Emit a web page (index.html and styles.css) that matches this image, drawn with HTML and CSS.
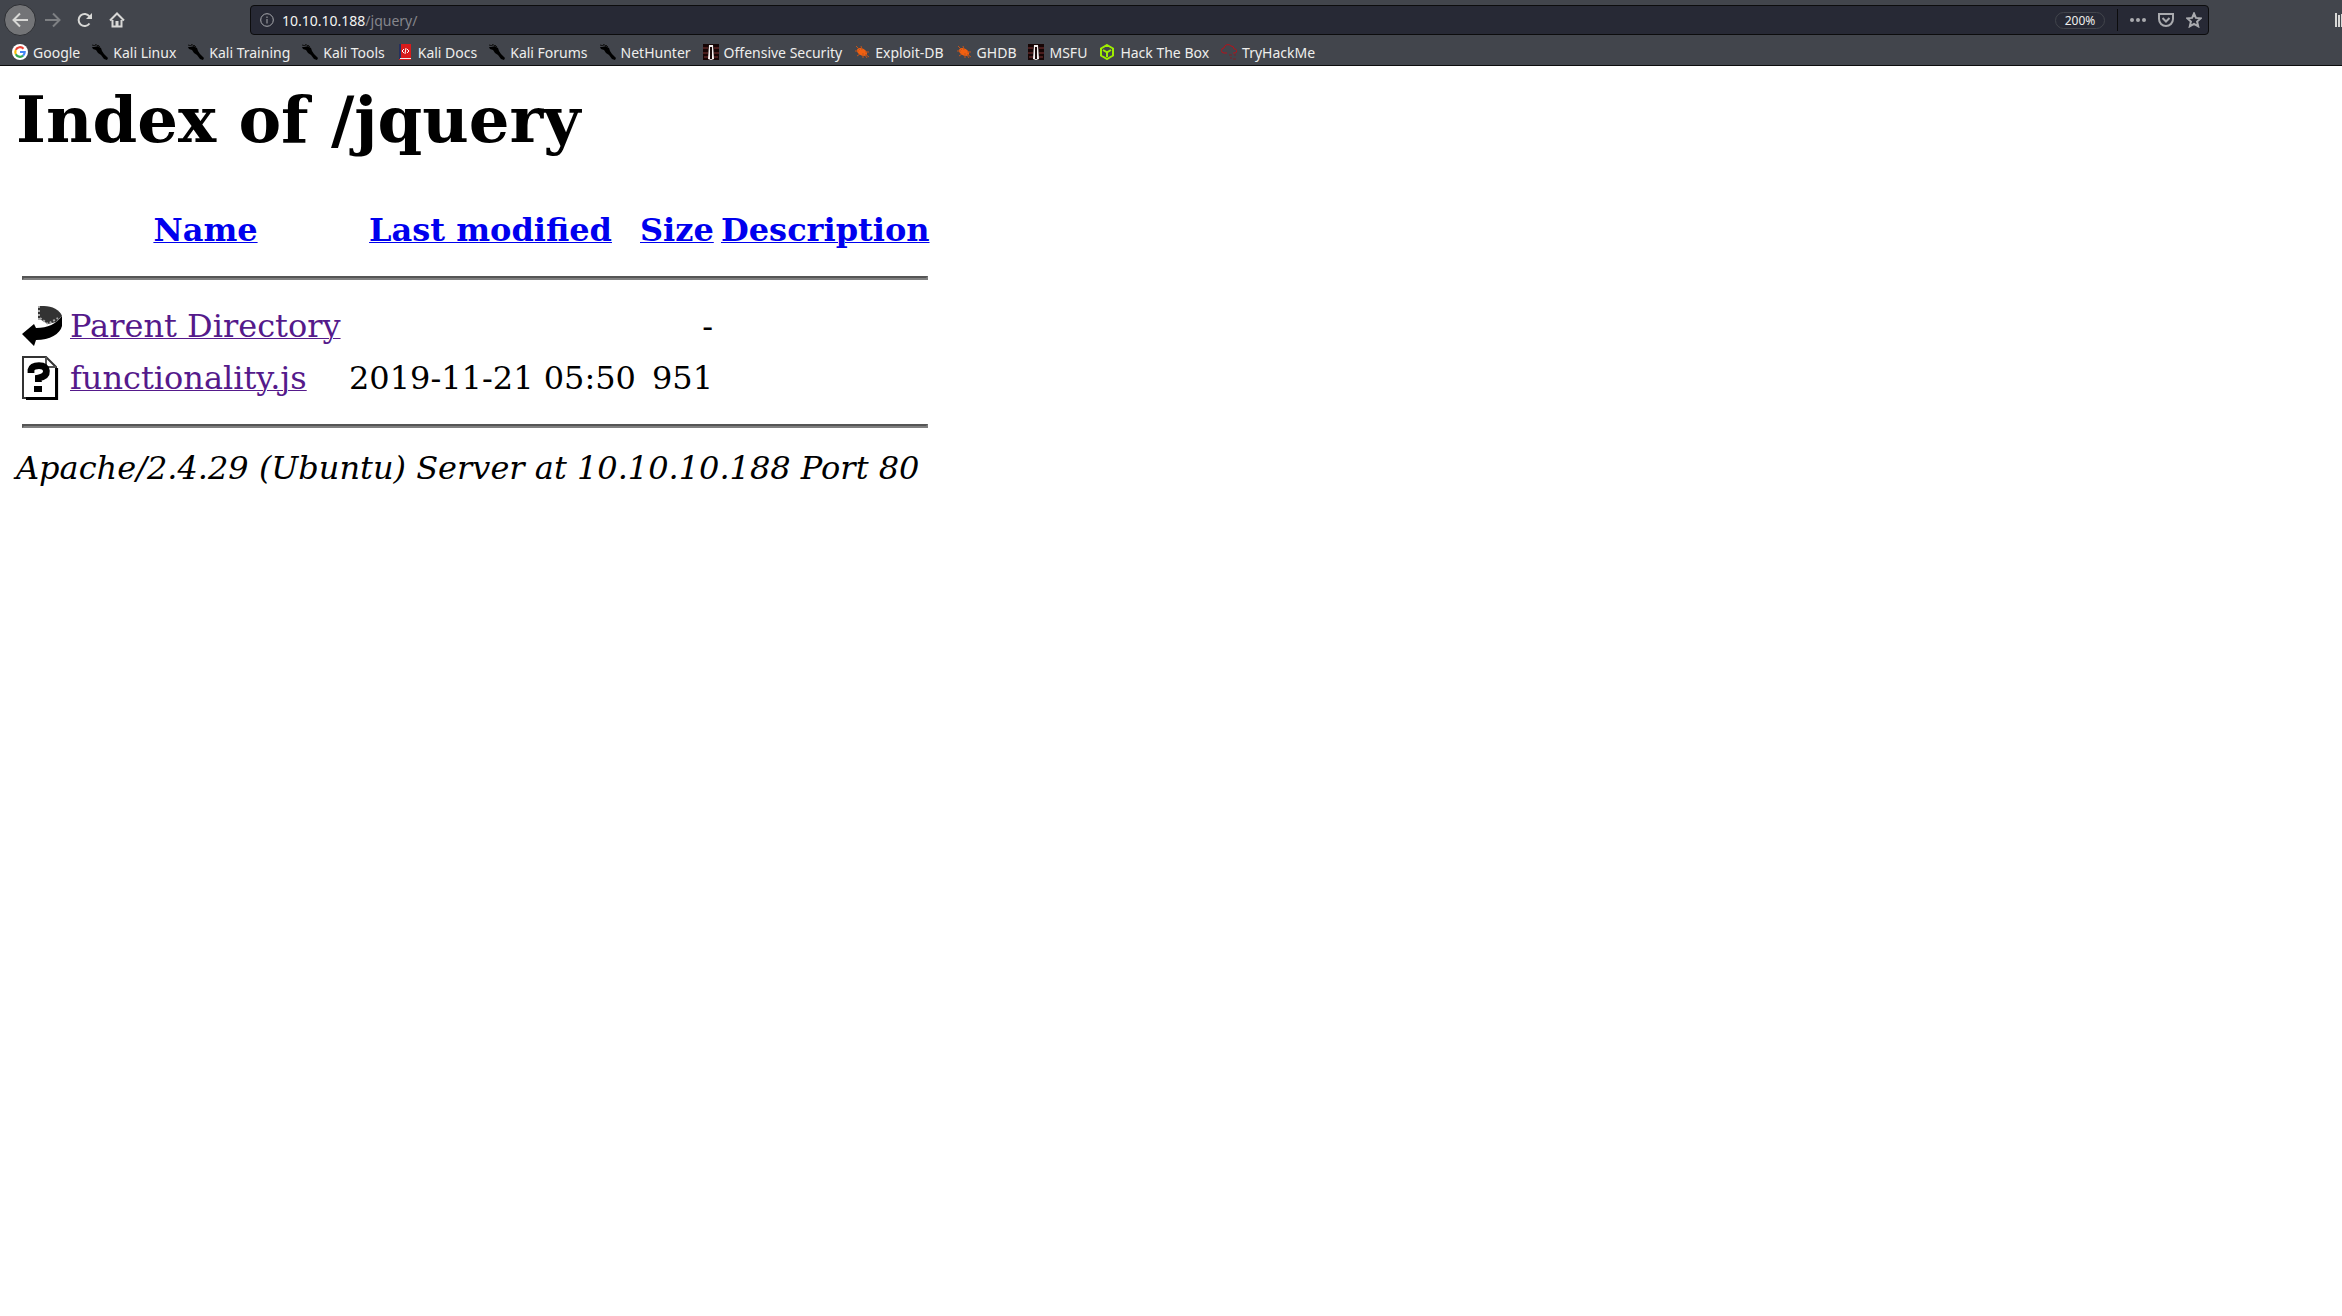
FILE: index.html
```html
<!DOCTYPE html>
<html lang="en">
<head>
<meta charset="utf-8">
<title>Index of /jquery</title>
<link rel="stylesheet" href="styles.css">
</head>
<body>
<svg class="defs" aria-hidden="true">
  <symbol id="kali" viewBox="0 0 16 16"><path d="M0 3h4l1-1 4 2 1 3 2 3 4 4-1 2-3-1-3-4-3-2-2-3-3-1z" fill="#000"/><path d="M0 1l4 1M3 0l5 3M6 1l2 2" stroke="#111" fill="none"/></symbol>
  <symbol id="offsec" viewBox="0 0 16 16"><path d="M0 0h16v16H0z" fill="#160505"/><path d="M0 4h5M11 4h5M0 9h5M11 9h5M1 13h4M11 13h4" stroke="#4a1c1c" stroke-width="2"/><path d="M6 1h4l1 14-3 1-3-1z" fill="#f4eeee"/><path d="M7 3h2v12H7z" fill="#1a0a0a"/></symbol>
  <symbol id="bug" viewBox="0 0 16 16"><ellipse cx="8" cy="8" rx="5.500" ry="3.500" transform="rotate(28 8 8)" fill="#f26010"/><path d="M2 2l4 4M7 2l1 4M1 7h4M3 12l3-2M9 14V9M13 14l-2-3M15 8l-4 0M15 13l-4-3" stroke="#c4541a"/></symbol>
</svg>
<header class="chrome">
  <div class="toolbar">
    <nav class="controls" aria-label="Navigation">
      <button class="tool back" aria-label="Back"><svg viewBox="0 0 16 16"><path d="M16 8H1M8 1.500L1.500 8 8 14.500"/></svg></button>
      <button class="tool dim" aria-label="Forward"><svg viewBox="0 0 16 16"><path d="M0 8h15M8 1.500L14.500 8 8 14.500"/></svg></button>
      <button class="tool" aria-label="Reload"><svg viewBox="0 0 16 16"><path d="M12.500 11.500A6 6 0 1 1 12.500 4.500"/><path class="solid" d="M15 1v6H9z"/></svg></button>
      <button class="tool" aria-label="Home"><svg viewBox="0 0 16 16"><path d="M1 8.500L8 1.500l7 7M3.500 8v6.500h9V8"/><path class="solid" d="M6.500 9h3v5h-3z"/></svg></button>
    </nav>
    <div class="urlbar">
      <svg class="info" viewBox="0 0 14 14"><circle cx="7" cy="7" r="6.300"/><path d="M7 6v4.500M7 3.500v1.500"/></svg>
      <div class="address"><span class="host">10.10.10.188</span>/jquery/</div>
      <button class="zoom">200%</button>
      <span class="divider"></span>
      <div class="actions">
        <button aria-label="Page actions"><svg viewBox="0 0 16 16"><g class="solid"><circle cx="2" cy="8" r="2"/><circle cx="8" cy="8" r="2"/><circle cx="14" cy="8" r="2"/></g></svg></button>
        <button aria-label="Save to Pocket"><svg viewBox="0 0 16 16"><path d="M1 2h14v5a7 7 0 0 1-14 0zM4.500 6L8 9.500 11.500 6"/></svg></button>
        <button aria-label="Bookmark this page"><svg viewBox="0 0 16 16"><path d="M8 1.500l1.900 4.400 4.800.4-3.600 3.200 1.100 4.800L8 11.800l-4.200 2.500 1.100-4.800-3.600-3.200 4.800-.4z"/></svg></button>
      </div>
    </div>
    <button class="library" aria-label="Library"><svg viewBox="0 0 16 16"><path d="M1 1v14M4 3v12M7 2v13M11 3l3 12"/></svg></button>
  </div>
  <nav class="bookmarks" aria-label="Bookmarks">
    <a href="#"><svg viewBox="0 0 16 16"><circle cx="8" cy="8" r="8" fill="#fff"/><g fill="none" stroke-width="2.200"><path d="M11.500 4.700A4.700 4.700 0 0 0 3.800 5.900" stroke="#ea4335"/><path d="M3.800 5.900a4.700 4.700 0 0 0 0 4.300" stroke="#fbbc05"/><path d="M3.800 10.200a4.700 4.700 0 0 0 7.300 1.400" stroke="#34a853"/><path d="M11.100 11.600A4.700 4.700 0 0 0 12.700 8H8" stroke="#4285f4"/></g></svg>Google</a>
    <a href="#"><svg><use href="#kali"/></svg>Kali Linux</a>
    <a href="#"><svg><use href="#kali"/></svg>Kali Training</a>
    <a href="#"><svg><use href="#kali"/></svg>Kali Tools</a>
    <a href="#"><svg viewBox="0 0 16 16"><path d="M2 0h12v16H2z" fill="#d81b1b"/><path d="M2 0h2v15H2z" fill="#26315e"/><path d="M3 14h11v1H3z" fill="#eee"/><path d="M7 5L5 7l2 2M10 5l2 2-2 2M9 4L8 10" stroke="#fff" fill="none"/></svg>Kali Docs</a>
    <a href="#"><svg><use href="#kali"/></svg>Kali Forums</a>
    <a href="#"><svg><use href="#kali"/></svg>NetHunter</a>
    <a href="#"><svg><use href="#offsec"/></svg>Offensive Security</a>
    <a href="#"><svg><use href="#bug"/></svg>Exploit-DB</a>
    <a href="#"><svg><use href="#bug"/></svg>GHDB</a>
    <a href="#"><svg><use href="#offsec"/></svg>MSFU</a>
    <a href="#"><svg viewBox="0 0 16 16"><path d="M8 1l6 3.500v7L8 15l-6-3.500v-7zM4 6l4 2.300L12 6M8 8v5" fill="none" stroke="#9fef00" stroke-width="2"/></svg>Hack The Box</a>
    <a href="#"><svg viewBox="0 0 16 16"><path d="M6 9H3a2.500 2.500 0 0 1 0-5 4 4 0 0 1 7-2 3 3 0 0 1 3 3 2 2 0 0 1 1 4h-2" fill="none" stroke="#b5121b"/><path d="M8 11h3M13 11h2M9 14h2M12 15h3" stroke="#7c2026"/></svg>TryHackMe</a>
  </nav>
</header>
<main class="listing">
  <h1>Index of /jquery</h1>
  <table>
    <colgroup><col class="col-icon"><col class="col-name"><col class="col-date"><col class="col-size"><col class="col-desc"></colgroup>
    <thead>
      <tr><th class="icon"></th><th><a href="#">Name</a></th><th><a href="#">Last modified</a></th><th><a href="#">Size</a></th><th><a href="#">Description</a></th></tr>
      <tr><th colspan="5"><hr></th></tr>
    </thead>
    <tbody>
      <tr>
        <td class="icon"><svg viewBox="0 0 20 22"><path d="M8 1h3c4 0 8 2 9 5l-3 3-4 1-5-3z" fill="#333"/><path d="M8.500 1v7M9 7l4 3 5-3" fill="none" stroke="#aaa" stroke-dasharray="1 1"/><path d="M20 6v5c-1 4-6 7-13 7l-1 3-6-6 6-5 1 2c6 0 10-2 13-6z" fill="#000"/></svg></td>
        <td><a class="visited" href="#">Parent Directory</a></td><td></td><td class="num">-</td><td></td>
      </tr>
      <tr>
        <td class="icon"><svg viewBox="0 0 20 22"><path d="M.5.500h11.500l5 5v15.500H.5z" fill="#fff" stroke="#333"/><path d="M12 .5v5h5" fill="none" stroke="#555"/><path d="M17.300 6v15.300H2" fill="none" stroke="#000" stroke-width="1.500"/><path d="M4.500 8.500V7Q5 4.800 8.500 4.800T12.200 7.500 8.200 11V13" fill="none" stroke="#000" stroke-width="3.400"/><path d="M6 15h4v3H6z"/></svg></td>
        <td><a class="visited" href="#">functionality.js</a></td><td class="num">2019-11-21 05:50</td><td class="num">951</td><td></td>
      </tr>
      <tr><th colspan="5"><hr></th></tr>
    </tbody>
  </table>
  <address>Apache/2.4.29 (Ubuntu) Server at 10.10.10.188 Port 80</address>
</main>
</body>
</html>
```

FILE: styles.css
```css
* { box-sizing: border-box; }

body {
  margin: 0;
  background: #fff;
  color: #000;
  font: 32px "DejaVu Serif", serif;
}

svg { display: block; flex: none; }
.defs { display: none; }

button {
  padding: 0;
  border: 0;
  background: none;
  color: inherit;
  font: inherit;
}

/* Browser chrome */
.chrome {
  height: 66px;
  overflow: hidden;
  border-bottom: 1px solid #0c0c0d;
  background: #42454c;
  color: #eeeeec;
  font: 14px "Noto Sans", sans-serif;
}

.toolbar {
  display: flex;
  align-items: center;
  height: 40px;
  padding-left: 4px;
}

.controls { display: flex; }

.tool {
  display: grid;
  place-items: center;
  width: 32px;
  height: 32px;
}

.tool svg {
  width: 16px;
  height: 16px;
  fill: none;
  stroke: #d8d8d6;
  stroke-width: 2;
}

.tool .solid { fill: #d8d8d6; stroke: none; }

.back {
  margin-right: 1px;
  border: 1px solid #2d2f34;
  border-radius: 50%;
  background: #737477;
}

.dim { opacity: 0.4; }

.urlbar {
  display: flex;
  flex: 1;
  align-items: center;
  height: 30px;
  margin: 0 126px 0 117px;
  padding: 0 6px 0 9px;
  border: 1px solid #0c0c0d;
  border-radius: 4px;
  background: #272935;
}

.info {
  width: 14px;
  height: 14px;
  fill: none;
  stroke: #a9aaae;
}

.address { flex: 1; padding-left: 8px; color: #85868c; }
.host { color: #f4f4f2; }

.zoom {
  width: 50px;
  height: 17px;
  border: 1px solid #42454c;
  border-radius: 9px;
  font-size: 12px;
  line-height: 15px;
}

.divider { width: 1px; height: 22px; margin: 0 12px; background: #0c0c0d; }
.actions { display: flex; gap: 12px; }

.actions svg {
  width: 16px;
  height: 16px;
  fill: none;
  stroke: #a9aaae;
  stroke-width: 2;
}

.actions .solid { fill: #a9aaae; stroke: none; }

.library { width: 7px; overflow: hidden; }
.library svg { width: 16px; height: 16px; fill: none; stroke: #d8d8d6; stroke-width: 2; }

.bookmarks { display: flex; gap: 12px; height: 24px; padding-left: 12px; }

.bookmarks a {
  display: flex;
  align-items: center;
  gap: 5px;
  color: inherit;
  text-decoration: none;
  white-space: nowrap;
}

.bookmarks svg { width: 16px; height: 16px; }

/* Directory listing */
.listing { padding: 16px; }

h1 { margin: 0 0 44px; font-size: 64px; line-height: 76px; }

table {
  width: 918px;
  table-layout: fixed;
  border-spacing: 4px;
  line-height: 37px;
  white-space: nowrap;
}

.col-icon { width: 44px; }
.col-name { width: 275px; }
.col-date { width: 287px; }
.col-size { width: 77px; }
.col-desc { width: 211px; }

th, td { padding: 2px; vertical-align: middle; }
th { text-align: center; }
td { text-align: left; }
.icon { height: 48px; }
.icon svg { width: 40px; height: 44px; }
.num { text-align: right; }

a { color: #0000ee; text-decoration-thickness: 1px; }
a.visited { color: #551a8b; }

hr {
  margin: 16px 0;
  border: 2px solid;
  border-color: #555 #808080 #808080 #555;
}

address { line-height: 37px; }
```
